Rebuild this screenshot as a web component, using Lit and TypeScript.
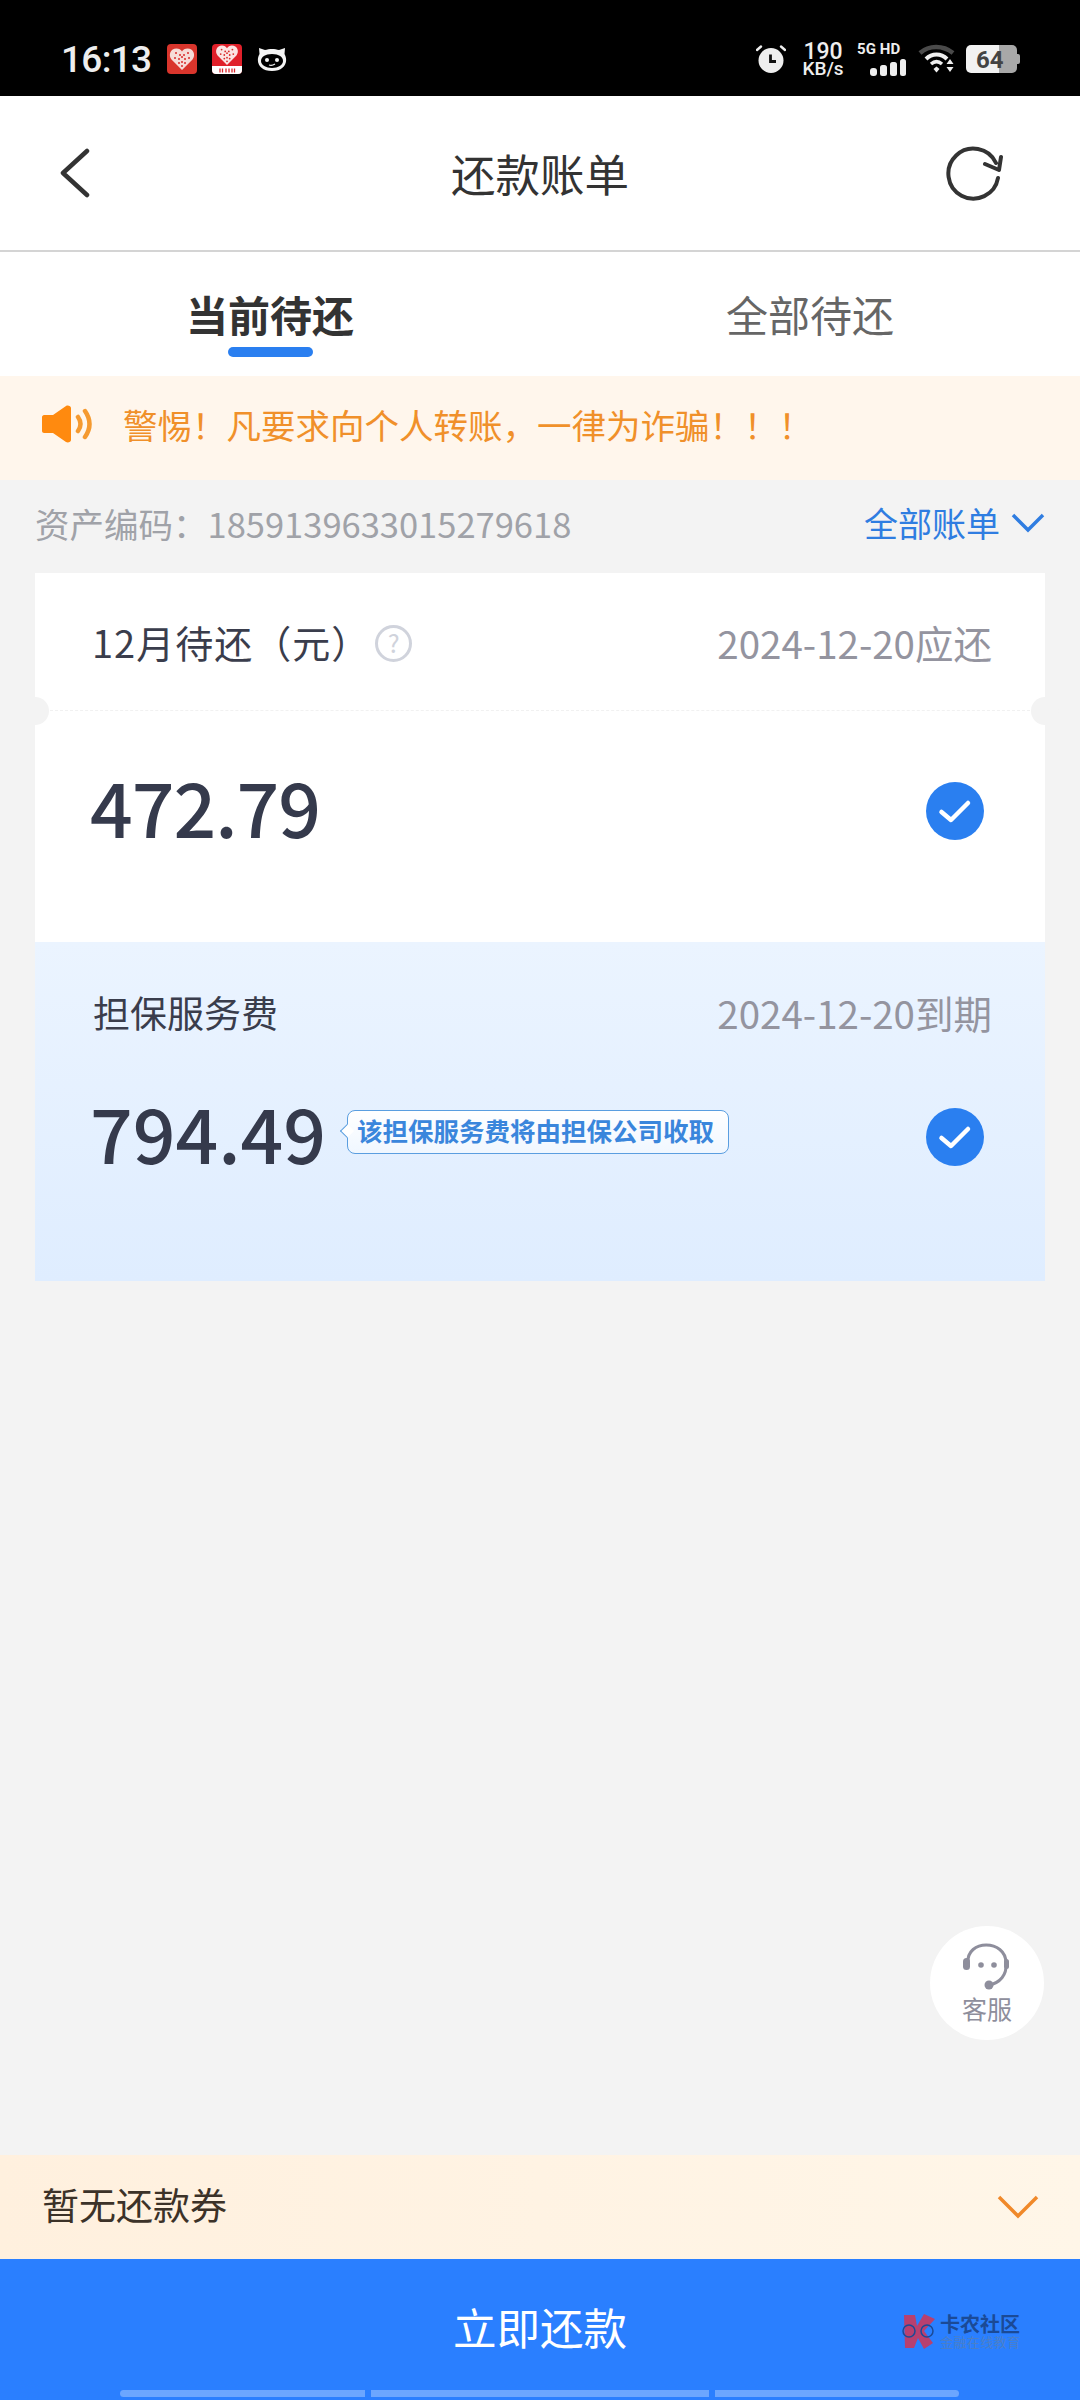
import { LitElement, html, css, svg } from 'lit';
import { customElement } from 'lit/decorators.js';

const heart = 'M15 26 L4.500 15.500 C1 11 3.500 4.500 9.500 4.500 C12 4.500 14 5.800 15 7.500 C16 5.800 18 4.500 20.500 4.500 C26.500 4.500 29 11 25.500 15.500 Z';

const heartDots = svg`
  <g fill="#d92b2b">
    <circle cx="9" cy="9" r="1"/><circle cx="13" cy="11" r="1"/><circle cx="17" cy="11" r="1"/>
    <circle cx="21" cy="9" r="1"/><circle cx="8" cy="14" r="1"/><circle cx="12" cy="15" r="1"/>
    <circle cx="15" cy="13" r="1"/><circle cx="18" cy="15" r="1"/><circle cx="22" cy="14" r="1"/>
    <circle cx="12" cy="19" r="1"/><circle cx="15" cy="18" r="1"/><circle cx="18" cy="19" r="1"/>
    <circle cx="15" cy="22" r="1"/>
  </g>`;

const iconCheck = html`<svg class="check" viewBox="0 0 58 58">
  <circle cx="29" cy="29" r="29" fill="#2a7ff0"/>
  <path d="M15.500 30 L25 38 L42 21" fill="none" stroke="#fff" stroke-width="4.500" stroke-linecap="round" stroke-linejoin="round"/>
</svg>`;

@customElement('status-bar')
export class StatusBar extends LitElement {
  static styles = css`
    :host { display: flex; align-items: center; height: 96px; padding: 22px 60px 0 61px; box-sizing: border-box; background: #000; color: #eee; font-family: Roboto, sans-serif; }
    .time { font-size: 37px; font-weight: 500; width: 106px; letter-spacing: -0.700px; }
    .notes { display: flex; gap: 15px; align-items: center; }
    .notes svg { width: 30px; height: 30px; display: block; }
    .right { display: flex; align-items: center; margin-left: auto; }
    .alarm { width: 30px; height: 30px; margin-right: 14px; }
    .speed { width: 46px; text-align: center; margin-right: 11px; line-height: 1; font-weight: 500; }
    .speed b { display: block; font-size: 23px; font-weight: 500; height: 19px; }
    .speed span { display: block; font-size: 19px; }
    .net { width: 49px; margin-right: 12px; }
    .net b { display: block; font-size: 15px; line-height: 15px; font-weight: 700; white-space: nowrap; letter-spacing: 0.100px; }
    .net svg { display: block; width: 36px; height: 17px; margin: 2px 0 0 13px; }
    .wifi { width: 38px; height: 30px; margin-right: 10px; }
    .battery { position: relative; width: 54px; height: 28px; }
    .battery svg { display: block; width: 54px; height: 28px; }
    .battery span { position: absolute; left: 10px; top: 2px; font-size: 24px; line-height: 26px; font-weight: 700; color: #444; }
  `;

  render() {
    return html`
      <div class="time">16:13</div>
      <div class="notes">
        <svg viewBox="0 0 30 30">
          <rect width="30" height="30" rx="4" fill="#d9352c"/>
          <path d=${heart} fill="#f6dcd8"/>${heartDots}
        </svg>
        <svg viewBox="0 0 30 30">
          <rect width="30" height="30" rx="4" fill="#e0202a"/>
          <path d="M0 22 H30 V26 A4 4 0 0 1 26 30 H4 A4 4 0 0 1 0 26 Z" fill="#fff"/>
          <g transform="translate(1.500 -2.500) scale(.9)"><path d=${heart} fill="#fbe4e4"/>${heartDots}</g>
          <path d="M8 24.500 v4 M10.500 24.500 v4 M14 24.500 v4 M17 24.500 v4 M20 24.500 v4 M22.500 24.500 v4" stroke="#d9252c" stroke-width="1.300"/>
        </svg>
        <svg viewBox="0 0 30 30">
          <path d="M2 4 L8 6 C12 4.500 18 4.500 22 6 L28 4 L27.500 10 C32 18 27 27 15 27 C3 27 -2 18 2.500 10 Z" fill="#f4f4f4"/>
          <path d="M15 10 C22 10 26 13 26 17 C26 21 21 24 15 24 C9 24 4 21 4 17 C4 13 8 10 15 10 Z" fill="#000"/>
          <circle cx="10" cy="16" r="2" fill="#f4f4f4"/><circle cx="20" cy="16" r="2" fill="#f4f4f4"/>
          <path d="M12 21 Q15 22 18 20" stroke="#f4f4f4" stroke-width="1.200" fill="none"/>
        </svg>
      </div>
      <div class="right">
        <svg class="alarm" viewBox="0 0 30 30">
          <circle cx="15" cy="16.500" r="12.500" fill="#eee"/>
          <path d="M1 6 L5 2.500 M29 6 L25 2.500" stroke="#eee" stroke-width="2.400" stroke-linecap="round"/>
          <path d="M14.500 10.500 V17.500 H20" stroke="#111" stroke-width="2.800" fill="none"/>
        </svg>
        <div class="speed"><b>190</b><span>KB/s</span></div>
        <div class="net">
          <b>5G HD</b>
          <svg viewBox="0 0 36 17" fill="#eee">
            <rect x="0" y="9" width="7" height="8" rx="3"/>
            <rect x="10" y="6" width="7" height="11" rx="2.500"/>
            <rect x="20" y="3" width="7" height="14" rx="2.500"/>
            <rect x="30" y="0" width="6" height="17" rx="2.500"/>
          </svg>
        </div>
        <svg class="wifi" viewBox="0 0 38 30" fill="none">
          <path d="M2 9 C11 1 25 1 35 9" stroke="#4a4a4a" stroke-width="4.500"/>
          <path d="M8 15 C14 9 23 9 29 15" stroke="#eee" stroke-width="4"/>
          <path d="M13 20 C16.500 17 20.500 17 24 20" stroke="#eee" stroke-width="3.500"/>
          <path d="M15.500 25 L18.500 22.500 L21.500 25 L18.500 28.500 Z" fill="#eee"/>
          <path d="M32 15 L35.500 20 H28.500 Z M32 28 L28.500 23 H35.500 Z" fill="#eee"/>
        </svg>
        <div class="battery">
          <svg viewBox="0 0 54 28">
            <path d="M5 0 H33 V28 H5 A5 5 0 0 1 0 23 V5 A5 5 0 0 1 5 0 Z" fill="#f2f2f2"/>
            <path d="M33 0 H46 A5 5 0 0 1 51 5 V23 A5 5 0 0 1 46 28 H33 Z" fill="#a8a8a8"/>
            <path d="M51 9 H52 A2 2 0 0 1 54 11 V17 A2 2 0 0 1 52 19 H51 Z" fill="#a8a8a8"/>
          </svg>
          <span>64</span>
        </div>
      </div>
    `;
  }
}

@customElement('app-root')
export class AppRoot extends LitElement {
  static styles = css`
    :host {
      display: flex;
      flex-direction: column;
      position: relative;
      height: 2400px;
      background: #f3f3f3;
      font-family: "Noto Sans CJK SC", sans-serif;
      overflow: hidden;
    }
    .nav {
      display: grid;
      grid-template-columns: 1fr auto 1fr;
      align-items: center;
      height: 156px;
      padding: 0 60px;
      box-sizing: border-box;
      background: #fff;
      border-bottom: 2px solid #d4d4d4;
    }
    .nav h1 { margin: 0; font-size: 44.500px; line-height: 60px; font-weight: 400; color: #333; }
    .back { width: 30px; height: 50px; display: block; }
    .refresh { width: 58px; height: 58px; margin-right: 17px; display: block; justify-self: end; }
    .tabs { display: flex; height: 124px; background: #fff; }
    .tab {
      position: relative;
      flex: 1;
      display: flex;
      justify-content: center;
      padding-top: 34px;
      box-sizing: border-box;
      font-size: 42px;
      line-height: 56px;
      color: #666;
    }
    .tab.active { color: #333; font-weight: 700; }
    .tab.active::after {
      content: "";
      position: absolute;
      left: 228px;
      top: 95px;
      width: 85px;
      height: 10px;
      border-radius: 5px;
      background: #2a7ff0;
    }
    .notice {
      display: flex;
      align-items: center;
      height: 104px;
      padding: 0 0 8px 42px;
      box-sizing: border-box;
      background: #fff6ec;
      color: #f0902a;
      font-size: 34.500px;
    }
    .notice svg { width: 52px; height: 38px; margin-right: 29px; display: block; }
    .asset {
      display: flex;
      align-items: center;
      justify-content: space-between;
      height: 93px;
      padding: 0 35px 8px;
      box-sizing: border-box;
      color: #a0a2a8;
      font-size: 34.500px;
    }
    .all { display: flex; align-items: center; color: #2f7de1; font-size: 34px; }
    .all svg { width: 34px; height: 20px; margin-left: 11px; display: block; }
    .card { margin: 0 35px; position: relative; }
    .top { position: relative; height: 369px; background: #fff; }
    .head { display: flex; align-items: center; justify-content: space-between; padding: 0 53px 0 58px; box-sizing: border-box; }
    .top .head { height: 138px; border-bottom: 1px dashed #f1f1f1; }
    .label { font-size: 37px; color: #3a3d4c; display: flex; align-items: center; }
    .top .label { font-size: 38px; letter-spacing: 1px; margin-left: -1px; }
    .date { font-size: 38.500px; color: #94949f; }
    .hint {
      width: 37px;
      height: 37px;
      margin: 3px 0 0 5px;
      box-sizing: border-box;
      border: 3px solid #d0d3dc;
      border-radius: 50%;
      color: #d0d3dc;
      font-size: 25px;
      line-height: 29px;
      text-align: center;
      letter-spacing: 0;
    }
    .notch { position: absolute; top: 124px; width: 28px; height: 28px; border-radius: 50%; background: #f3f3f3; }
    .notch.l { left: -14px; }
    .notch.r { right: -14px; }
    .row { display: flex; align-items: center; padding: 0 61px 0 55px; }
    .amount { font-size: 75px; font-weight: 500; color: #353a4c; line-height: 1; margin-bottom: 12px; }
    .top .amount { letter-spacing: -1px; }
    .check { width: 58px; height: 58px; margin-left: auto; display: block; }
    .top .row { height: 200px; }
    .fee { height: 339px; background: linear-gradient(#ebf4ff, #dfedff); }
    .fee .head { height: 139px; }
    .fee .row { height: 112px; }
    .tip {
      position: relative;
      margin: -10px 0 0 21px;
      padding: 0 14px 0 9px;
      height: 44px;
      line-height: 38px;
      box-sizing: border-box;
      border: 1.500px solid #5a9ee0;
      border-radius: 8px;
      background: linear-gradient(#fff, #f0f7ff);
      color: #3a86dc;
      font-size: 25.500px;
      font-weight: 700;
      white-space: nowrap;
    }
    .tip::before {
      content: "";
      position: absolute;
      left: -6px;
      top: 15px;
      width: 9px;
      height: 9px;
      background: #fff;
      border-left: 1.500px solid #5a9ee0;
      border-bottom: 1.500px solid #5a9ee0;
      transform: rotate(45deg);
    }
    .spacer { flex: 1; }
    .service {
      position: absolute;
      left: 930px;
      top: 1926px;
      width: 114px;
      height: 114px;
      border-radius: 50%;
      background: #fff;
      display: flex;
      flex-direction: column;
      align-items: center;
      color: #8e8e9c;
      font-size: 25px;
      line-height: 30px;
    }
    .service svg { width: 50px; height: 50px; margin-top: 15px; display: block; }
    .service span { margin-top: 2px; }
    .coupon {
      display: flex;
      align-items: center;
      justify-content: space-between;
      height: 104px;
      padding: 0 41px 0 42px;
      box-sizing: border-box;
      background: linear-gradient(90deg, #fff0de, #fff6e8);
      color: #3c3228;
      font-size: 37px;
    }
    .coupon .txt { margin-top: -7px; }
    .coupon svg { width: 42px; height: 24px; display: block; }
    .pay {
      position: relative;
      height: 141px;
      background: #2a7fff;
      color: #fff;
      font-size: 43.500px;
      display: flex;
      justify-content: center;
      padding-top: 36px;
      box-sizing: border-box;
      line-height: 64px;
    }
    .mark {
      position: absolute;
      left: 900px;
      top: 54px;
      display: flex;
      align-items: center;
      gap: 2px;
    }
    .mark svg { width: 38px; height: 36px; display: block; }
    .mark b { display: block; font-size: 20px; line-height: 22px; font-weight: 700; color: #1b4a96; white-space: nowrap; }
    .mark span { display: block; font-size: 13px; line-height: 14px; color: #4a7fc8; letter-spacing: 0.400px; white-space: nowrap; }
    .handle {
      position: absolute;
      left: 120px;
      top: 131px;
      display: flex;
      gap: 6px;
    }
    .handle i { display: block; height: 7px; background: #6ba6ff; }
    .handle i:first-child { width: 245px; border-radius: 4px 0 0 4px; }
    .handle i:nth-child(2) { width: 338px; }
    .handle i:last-child { width: 244px; border-radius: 0 4px 4px 0; }
  `;

  render() {
    return html`
      <status-bar></status-bar>
      <div class="nav">
        <svg class="back" viewBox="0 0 30 50" fill="none">
          <path d="M27 3 L3 25 L27 47" stroke="#333" stroke-width="4.500" stroke-linecap="round" stroke-linejoin="round"/>
        </svg>
        <h1>还款账单</h1>
        <svg class="refresh" viewBox="0 0 58 58" fill="none" stroke="#333" stroke-width="4" stroke-linecap="round" stroke-linejoin="round">
          <path d="M53 34 A25 25 0 1 1 51 19"/>
          <path d="M40 20 L54 26 L56 13"/>
        </svg>
      </div>
      <div class="tabs">
        <div class="tab active">当前待还</div>
        <div class="tab">全部待还</div>
      </div>
      <div class="notice">
        <svg viewBox="0 0 52 38">
          <path d="M2 10 H11 L24 1 C26 0 29 1 29 3 V35 C29 37 26 38 24 37 L11 28 H2 C1 28 0 27 0 26 V12 C0 11 1 10 2 10 Z" fill="#ff8a0f"/>
          <path d="M36 12 Q41 19 36 26 M43 6 Q52 19 43 32" fill="none" stroke="#f59a30" stroke-width="4.500" stroke-linecap="round"/>
        </svg>
        警惕！凡要求向个人转账，一律为诈骗！！！
      </div>
      <div class="asset">
        <div>资产编码：1859139633015279618</div>
        <div class="all">全部账单
          <svg viewBox="0 0 34 20" fill="none"><path d="M2 2 L17 17 L32 2" stroke="#2f7de1" stroke-width="3.500"/></svg>
        </div>
      </div>
      <div class="card">
        <div class="top">
          <div class="head">
            <div class="label">12月待还（元）<div class="hint">?</div></div>
            <div class="date">2024-12-20应还</div>
          </div>
          <i class="notch l"></i><i class="notch r"></i>
          <div class="row">
            <div class="amount">472.79</div>
            ${iconCheck}
          </div>
        </div>
        <div class="fee">
          <div class="head">
            <div class="label">担保服务费</div>
            <div class="date">2024-12-20到期</div>
          </div>
          <div class="row">
            <div class="amount">794.49</div>
            <div class="tip">该担保服务费将由担保公司收取</div>
            ${iconCheck}
          </div>
        </div>
      </div>
      <div class="spacer"></div>
      <div class="service">
        <svg viewBox="0 0 50 50" fill="none">
          <path d="M6 22 C4 -2 44 -2 44 22 C45 34 38 42 27 44" stroke="#8e8e9c" stroke-width="3"/>
          <rect x="1" y="17" width="7" height="12" rx="3.500" fill="#8e8e9c"/>
          <rect x="42" y="18" width="5" height="10" rx="2.500" fill="#8e8e9c"/>
          <circle cx="27" cy="44" r="4.500" fill="#8e8e9c"/>
          <circle cx="19" cy="24" r="2.800" fill="#8e8e9c"/><circle cx="32" cy="24" r="2.800" fill="#8e8e9c"/>
        </svg>
        <span>客服</span>
      </div>
      <div class="coupon">
        <div class="txt">暂无还款券</div>
        <svg viewBox="0 0 42 24" fill="none"><path d="M2 2 L21 21 L40 2" stroke="#f0892a" stroke-width="3.500"/></svg>
      </div>
      <div class="pay">
        立即还款
        <div class="mark">
          <svg viewBox="0 0 38 36">
            <path d="M4 2 H15 L17 13 L24 1 L35 6 L24 18 L33 30 L24 36 L18 25 L14 35 H5 Z" fill="#b8406f"/>
            <circle cx="9" cy="18" r="6" fill="none" stroke="#1b4a96" stroke-width="1.500"/>
            <circle cx="27" cy="18" r="6" fill="none" stroke="#1b4a96" stroke-width="1.500"/>
          </svg>
          <div><b>卡农社区</b><span>金融在线教育</span></div>
        </div>
        <div class="handle"><i></i><i></i><i></i></div>
      </div>
    `;
  }
}
